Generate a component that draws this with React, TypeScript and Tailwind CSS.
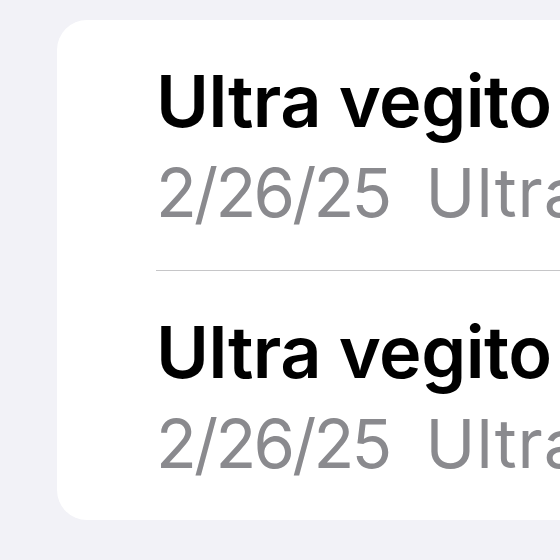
export default function App() {
  const rows = [
    { title: "Ultra vegito", date: "2/26/25", preview: "Ultra vegito" },
    { title: "Ultra vegito", date: "2/26/25", preview: "Ultra vegito" },
  ];

  return (
    <div className="h-[560px] w-full overflow-hidden bg-[#f2f2f7] pt-[20px] pl-[57px] font-['Inter',sans-serif]">
      <div className="h-[500px] rounded-l-[30px] bg-white pl-[99px]">
        {rows.map((row, i) => (
          <div
            key={i}
            className={
              i === 0
                ? "pt-[45px] pb-[44px] border-b border-[#c6c6c8] whitespace-nowrap"
                : "pt-[45px] pb-[44px] whitespace-nowrap"
            }
          >
            <div className="text-[72px] leading-none font-semibold text-black tracking-[-0.5px]">{row.title}</div>
            <div className="mt-[22px] text-[67px] leading-none text-[#8a8a8e]">
              <span className="tracking-[-2.8px]">{row.date}</span>
              <span className="ml-[36px] tracking-[1px]">{row.preview}</span>
            </div>
          </div>
        ))}
      </div>
    </div>
  );
}
